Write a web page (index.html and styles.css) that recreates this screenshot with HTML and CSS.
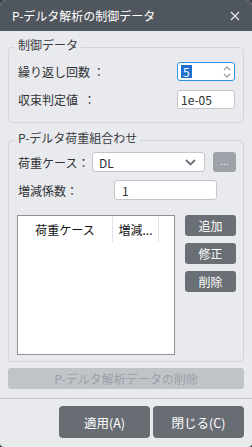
FILE: index.html
```html
<!DOCTYPE html>
<html lang="ja">
<head>
  <meta charset="UTF-8" />
  <meta name="viewport" content="width=device-width, initial-scale=1.0" />
  <title>P-デルタ解析の制御データ</title>
  <link rel="stylesheet" href="styles.css">
</head>
<body>
  <div class="window">
    <div class="titlebar">
      <span class="title">P-デルタ解析の制御データ</span>
      <svg class="close" width="10" height="10" viewBox="0 0 10 10">
        <path d="M1 1 L9 9 M9 1 L1 9" stroke="#e6e8ea" stroke-width="1.2" fill="none" />
      </svg>
    </div>

    <div class="content">
      <fieldset class="group group-control">
        <legend>制御データ</legend>
        <div class="row">
          <span class="label">繰り返し回数 ：</span>
          <div class="spin">
            <span class="sel">5</span>
            <svg class="spin-arrows" width="8" height="14" viewBox="0 0 8 14">
              <path d="M1 5 L4 2 L7 5 M1 9 L4 12 L7 9" stroke="#9ea3a9" stroke-width="1.3" fill="none" />
            </svg>
          </div>
        </div>
        <div class="row">
          <span class="label">収束判定値 &nbsp;：</span>
          <div class="field small">1e-05</div>
        </div>
      </fieldset>

      <fieldset class="group group-combo">
        <legend>P-デルタ荷重組合わせ</legend>
        <div class="row">
          <span class="label case-label">荷重ケース：</span>
          <div class="select">
            <span>DL</span>
            <svg width="11" height="7" viewBox="0 0 11 7">
              <path d="M1 1 L5.5 5.5 L10 1" stroke="#6b7078" stroke-width="1.8" fill="none" />
            </svg>
          </div>
          <div class="dots">...</div>
        </div>
        <div class="row">
          <span class="label factor-label">増減係数：</span>
          <div class="field factor">1</div>
        </div>
        <div class="list-row">
          <div class="list">
            <div class="list-head">
              <div class="col col-case">荷重ケース</div>
              <div class="col col-factor">増減...</div>
            </div>
          </div>
          <div class="side-buttons">
            <button class="btn-small">追加</button>
            <button class="btn-small">修正</button>
            <button class="btn-small">削除</button>
          </div>
        </div>
      </fieldset>

      <button class="btn-delete">P-デルタ解析データの削除</button>
    </div>

    <div class="footer">
      <button class="btn-main">適用(A)</button>
      <button class="btn-main">閉じる(C)</button>
    </div>
  </div>
</body>
</html>
```

FILE: styles.css
```css
body {
  margin: 0;
  background: #3a3d40;
  font-family: "Noto Sans CJK JP", "Noto Sans", sans-serif;
  font-size: 12px;
  color: #2e3135;
}
.window {
  width: 252px;
  height: 447px;
  background: #e9eaed;
  border-radius: 6px 6px 4px 4px;
  overflow: hidden;
  display: flex;
  flex-direction: column;
}
.titlebar {
  height: 31px;
  background: #50565d;
  color: #ffffff;
  display: flex;
  align-items: center;
  justify-content: space-between;
  padding: 0 12px;
  flex-shrink: 0;
}
.title {
  font-size: 12px;
}
.content {
  padding: 6px 8px 0;
  display: flex;
  flex-direction: column;
}
.group {
  margin: 0;
  border: 1px solid #d3d5d9;
  border-radius: 4px;
  padding: 5px 7px 13px 9px;
  min-width: 0;
}
.group legend {
  padding: 0 3px 4px;
  margin-left: -3px;
  line-height: 16px;
  color: #3a3d41;
}
.group-control .row + .row {
  margin-top: 9px;
}
.group-combo {
  margin-top: 7px;
  padding-top: 2px;
  padding-bottom: 6px;
}
.group-combo .row + .row {
  margin-top: 8px;
}
.row {
  display: flex;
  align-items: center;
  height: 19px;
}
.group-combo .row {
  height: 20px;
}
.label {
  white-space: pre;
  flex-shrink: 0;
}
.case-label {
  width: 74px;
}
.factor-label {
  width: 96px;
}
.spin, .field, .select {
  box-sizing: border-box;
  height: 100%;
  background: #ffffff;
  border: 1px solid #c3c6cb;
  border-radius: 3px;
  display: flex;
  align-items: center;
  padding-left: 3px;
}
.spin, .small {
  width: 58px;
  margin-left: auto;
  margin-right: 1px;
}
.spin {
  border: 1.5px solid #2d95e0;
  justify-content: space-between;
  padding-right: 3px;
}
.sel {
  background: #1f6fcf;
  color: #ffffff;
  padding: 0 2px;
  line-height: 13px;
}
.select {
  width: 113px;
  justify-content: space-between;
  padding: 0 8px 0 6px;
}
.dots {
  width: 23px;
  height: 20px;
  margin-left: 8px;
  background: #9ea2a8;
  border-radius: 3px;
  color: #eef0f2;
  font-size: 10px;
  display: flex;
  align-items: center;
  justify-content: center;
  padding-bottom: 3px;
  box-sizing: border-box;
}
.factor {
  width: 103px;
  padding-left: 7px;
}
.list-row {
  display: flex;
  gap: 10px;
  margin-top: 15px;
}
.list {
  width: 158px;
  height: 140px;
  margin-left: -1px;
  box-sizing: border-box;
  background: #ffffff;
  border: 1px solid #8e9196;
}
.list-head {
  display: flex;
  height: 26px;
}
.col {
  display: flex;
  align-items: center;
  justify-content: center;
  color: #111111;
  border-right: 1px solid #e2e3e5;
}
.col-case {
  width: 94px;
}
.col-factor {
  width: 45px;
}
.side-buttons {
  display: flex;
  flex-direction: column;
  gap: 7px;
}
button {
  font-family: inherit;
  border: none;
  cursor: pointer;
}
.btn-small {
  width: 51px;
  height: 21px;
  padding: 0;
  background: #6a6f76;
  color: #ffffff;
  font-size: 12px;
  border-radius: 3px;
}
.btn-delete {
  margin-top: 6px;
  height: 21px;
  background: #c0c4c9;
  color: #9aa0a6;
  font-size: 12px;
  border-radius: 3px;
  padding: 0;
}
.footer {
  margin-top: 9px;
  border-top: 1px solid #c6c8cb;
  padding: 7px 8px 0;
  display: flex;
  justify-content: flex-end;
  gap: 3px;
}
.btn-main {
  width: 91px;
  height: 32px;
  background: #686d74;
  color: #ffffff;
  font-size: 12.5px;
  border-radius: 4px;
  padding: 0;
}
```
